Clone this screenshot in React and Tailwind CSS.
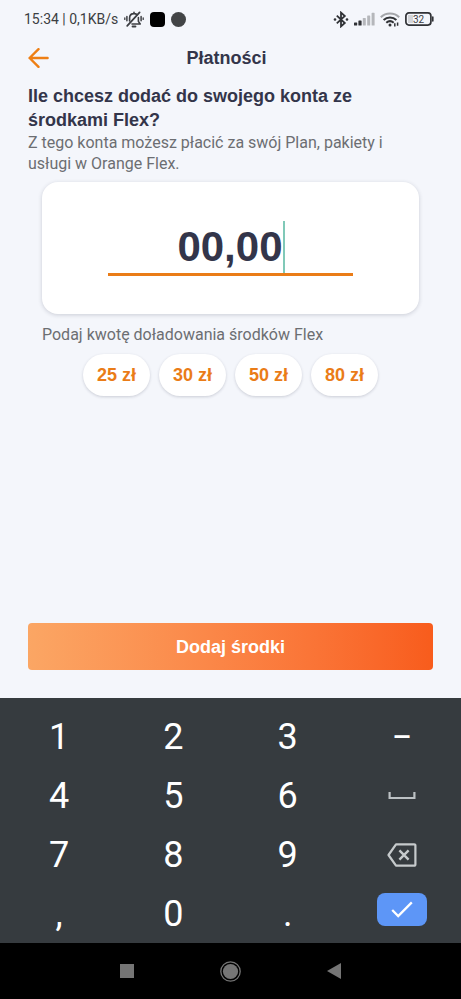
const amounts = ['25 zł', '30 zł', '50 zł', '80 zł'];

const BackIcon = () => (
  <svg width="21" height="20" viewBox="0 0 21 20" fill="none" stroke="currentColor" strokeWidth="2.4" strokeLinecap="round" strokeLinejoin="round">
    <path d="M10.5 1.2 1.6 10l8.9 8.8M1.6 10h18" />
  </svg>
);

const BellOffIcon = () => (
  <svg width="20" height="17" viewBox="0 0 20 17" fill="none" stroke="currentColor" strokeWidth="1.6" strokeLinecap="round" strokeLinejoin="round">
    <path d="M5.6 10V7C5.6 4.4 7.4 2.6 10 2.6c1.2 0 2.2.3 3 1M14.4 6.6V10.4l1.8 2.6H8M10 1.2V2.6" />
    <path d="M8.6 15.6h2.8" strokeWidth="2" />
    <path d="M3.2 14.8 15.6 1.4" strokeWidth="1.8" />
    <path d="M2.9 5.4v4.4M17.1 5.4v4.4" strokeWidth="1.5" />
    <path d="M.8 6.8v1.6M19.2 6.8v1.6" strokeWidth="1.3" />
  </svg>
);

const BluetoothIcon = () => (
  <svg width="16" height="17" viewBox="0 0 16 17" fill="none" stroke="#303236" strokeWidth="1.8">
    <path d="m3.8 4.6 8 7.4L8 15.4V1.6L11.8 5l-8 7.4" />
    <circle cx="2" cy="8.5" r="1.3" fill="#303236" stroke="none" />
    <circle cx="14" cy="8.5" r="1.3" fill="#303236" stroke="none" />
  </svg>
);

const SignalIcon = () => (
  <svg width="21" height="14" viewBox="0 0 21 14">
    <g fill="#303236">
      <rect x="0" y="10.5" width="3.2" height="3" rx=".6" />
      <rect x="4.4" y="8.5" width="3.2" height="5" rx=".6" />
    </g>
    <g fill="#b5b7bb">
      <rect x="8.8" y="6" width="3" height="7.5" rx=".6" />
      <rect x="13.2" y="3.5" width="3" height="10" rx=".6" />
      <rect x="17.6" y=".8" width="3" height="12.7" rx=".6" />
    </g>
  </svg>
);

const WifiIcon = () => (
  <svg width="20" height="15" viewBox="0 0 20 15" fill="none" strokeWidth="2">
    <path d="M.8 5.2C5.8.2 14.2.2 19.2 5.2" stroke="#a4a6aa" />
    <path d="M3.6 8c3.6-3.5 9.2-3.5 12.8 0M6.3 10.8c2.2-2 5.2-2 7.4 0" stroke="#303236" />
    <circle cx="10" cy="13" r="1.5" fill="#303236" />
    <path d="M14.8 11.2v3.2M17.6 10.6v3.2" stroke="#303236" strokeWidth="1.5" />
  </svg>
);

const BatteryIcon = () => (
  <svg width="29" height="14" viewBox="0 0 29 14">
    <rect x="3" y="3" width="5" height="8" fill="#d3d5d9" />
    <rect x=".9" y=".9" width="25" height="12.2" rx="3" fill="none" stroke="#303236" strokeWidth="1.7" />
    <path d="M27.8 5v4" stroke="#303236" strokeWidth="1.6" strokeLinecap="round" />
    <text x="13.5" y="10.5" textAnchor="middle" fontSize="10" fill="#3c3e42">32</text>
  </svg>
);

const SpaceIcon = () => (
  <svg width="28" height="10" viewBox="0 0 28 10" fill="none" stroke="#bcc1c4" strokeWidth="2.2">
    <path d="M1.6 1v6h24.8V1" />
  </svg>
);

const BackspaceIcon = () => (
  <svg width="30" height="24" viewBox="0 0 30 24" fill="none" stroke="#c6cacc" strokeWidth="2.2" strokeLinejoin="round">
    <path d="M9 1.3h18.2a1.2 1.2 0 0 1 1.2 1.2v19a1.2 1.2 0 0 1-1.2 1.2H9L1.5 12z" />
    <path d="m12.4 7.4 9.2 9.2m0-9.2-9.2 9.2" strokeWidth="2.4" />
  </svg>
);

const CheckIcon = () => (
  <svg width="22" height="17" viewBox="0 0 22 17" fill="none" stroke="currentColor" strokeWidth="2.3">
    <path d="m1.2 9 6 6L20.8 1.4" />
  </svg>
);

const keys = [
  { id: '1', label: '1' },
  { id: '2', label: '2' },
  { id: '3', label: '3' },
  { id: 'Minus', label: <span className="text-3xl font-medium">–</span> },
  { id: '4', label: '4' },
  { id: '5', label: '5' },
  { id: '6', label: '6' },
  { id: 'Spacja', label: <SpaceIcon /> },
  { id: '7', label: '7' },
  { id: '8', label: '8' },
  { id: '9', label: '9' },
  { id: 'Usuń', label: <BackspaceIcon /> },
  { id: ',', label: ',' },
  { id: '0', label: '0' },
  { id: '.', label: '.' },
];

function StatusBar() {
  return (
    <div className="flex h-9 items-center justify-between pl-6 pr-[27px] pt-0.5 font-[Roboto,sans-serif] text-sm text-[#3c3e42]">
      <div className="flex items-center">
        <span>15:34 | 0,1KB/s</span>
        <span className="ml-1.5"><BellOffIcon /></span>
        <span className="ml-1.5 size-[15px] rounded bg-black" />
        <span className="ml-1.5 size-[15px] rounded-full bg-[#424446]" />
      </div>
      <div className="flex items-center gap-[5px]">
        <BluetoothIcon />
        <SignalIcon />
        <WifiIcon />
        <BatteryIcon />
      </div>
    </div>
  );
}

export default function App() {
  return (
    <div className="flex min-h-screen flex-col bg-[#f4f6fb] font-['Liberation_Sans',sans-serif] text-[#33354a]">
      <StatusBar />

      <header className="grid h-11 grid-cols-[1fr_auto_1fr] items-center pl-7 pr-9">
        <button aria-label="Wstecz" className="justify-self-start text-[#ee7f14]">
          <BackIcon />
        </button>
        <h1 className="text-lg font-bold">Płatności</h1>
      </header>

      <main className="flex flex-1 flex-col px-7 pb-7 pt-1">
        <h2 className="text-lg leading-6 font-bold">Ile chcesz dodać do swojego konta ze środkami Flex?</h2>
        <p className="pr-4 font-[Roboto,sans-serif] text-base leading-[21px] text-[#6c6e72]">
          Z tego konta możesz płacić za swój Plan, pakiety i usługi w Orange Flex.
        </p>

        <div className="mx-3.5 mt-2 flex h-[132px] justify-center rounded-2xl bg-white pt-[38px] shadow-[0_1px_4px_rgba(40,45,70,0.2)]">
          <div className="flex h-[56px] w-[245px] items-center justify-center border-b-[3px] border-[#ea7c17]">
            <input
              id="amount"
              defaultValue="00,00"
              inputMode="decimal"
              className="w-[106px] bg-transparent text-right text-[42px] font-bold outline-none"
            />
            <span className="h-[52px] w-0.5 bg-[#80c9b8]" />
          </div>
        </div>
        <label htmlFor="amount" className="mx-3.5 mt-2.5 font-[Roboto,sans-serif] text-base leading-[21px] text-[#6c6e72]">
          Podaj kwotę doładowania środków Flex
        </label>

        <div className="mt-[9px] flex justify-center gap-[9px]">
          {amounts.map((amount) => (
            <button
              key={amount}
              className="h-[42px] w-[67px] rounded-full bg-white text-lg font-bold text-[#ea7c17] shadow-[0_1px_3px_rgba(40,45,70,0.2)]"
            >
              {amount}
            </button>
          ))}
        </div>

        <button className="mt-auto h-[47px] rounded bg-linear-to-r from-[#fba664] to-[#f85c1c] text-lg font-bold text-white">
          Dodaj środki
        </button>
      </main>

      <div className="grid auto-rows-[59px] grid-cols-4 bg-[#363b3f] px-0.5 pt-[9px] font-[Roboto,sans-serif] text-4xl text-white">
        {keys.map(({ id, label }) => (
          <button key={id} aria-label={id} className="flex items-center justify-center">
            {label}
          </button>
        ))}
        <div className="flex items-center justify-center pb-2">
          <button aria-label="Gotowe" className="flex h-[33px] w-[50px] items-center justify-center rounded-lg bg-[#5d96f7]">
            <CheckIcon />
          </button>
        </div>
      </div>

      <nav className="flex h-14 items-center justify-center gap-[86px] bg-black text-[#757575]">
        <button aria-label="Ostatnie">
          <span className="block size-3.5 bg-current" />
        </button>
        <button aria-label="Ekran główny">
          <svg width="21" height="21" viewBox="0 0 21 21">
            <circle cx="10.5" cy="10.5" r="9.7" fill="none" stroke="currentColor" strokeWidth="1.3" />
            <circle cx="10.5" cy="10.5" r="7.6" fill="currentColor" />
          </svg>
        </button>
        <button aria-label="Cofnij">
          <svg width="14" height="16" viewBox="0 0 14 16" fill="currentColor">
            <path d="M14 0v16L0 8z" />
          </svg>
        </button>
      </nav>
    </div>
  );
}
